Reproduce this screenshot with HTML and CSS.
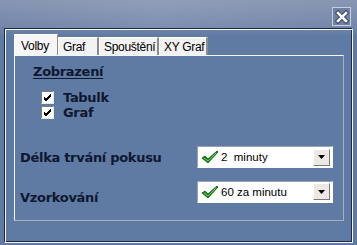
FILE: index.html
```html
<!DOCTYPE html>
<html>
<head>
<meta charset="utf-8">
<link rel="stylesheet" href="styles.css">
</head>
<body>
<div class="window">
  <div class="titlebar">
    <div class="close">
      <svg width="14" height="14" viewBox="0 0 14 14">
        <path d="M3 3 L11 11 M11 3 L3 11" stroke="#2c3b58" stroke-width="4.4" stroke-linecap="square"/>
        <path d="M3 3 L11 11 M11 3 L3 11" stroke="#ffffff" stroke-width="2.6" stroke-linecap="square"/>
      </svg>
    </div>
  </div>
  <div class="frame">
    <div class="tabs">
      <div class="tab active">Volby</div>
      <div class="tab t-graf">Graf</div>
      <div class="tab t-spou">Spouštění</div>
      <div class="tab t-xy">XY Graf</div>
    </div>
    <div class="panel">
      <div class="heading">Zobrazení</div>
      <div class="checks">
        <div class="check">
          <span class="box"><svg width="9" height="9" viewBox="0 0 9 9"><path d="M1 4 L3 6 L8 1 M1 5 L3 7 L8 2 M1 6 L3 8 L8 3" stroke="#000" stroke-width="1" fill="none"/></svg></span>
          <span class="clabel clip">Tabulky</span>
        </div>
        <div class="check">
          <span class="box"><svg width="9" height="9" viewBox="0 0 9 9"><path d="M1 4 L3 6 L8 1 M1 5 L3 7 L8 2 M1 6 L3 8 L8 3" stroke="#000" stroke-width="1" fill="none"/></svg></span>
          <span class="clabel">Graf</span>
        </div>
      </div>
      <div class="row row1">
        <span class="label">Délka trvání pokusu</span>
        <div class="combo">
          <svg class="ok" width="18" height="14" viewBox="0 0 18 14"><path d="M1 8 L4 6 L7 9 L16 1 L17 2 L7 13 Z" fill="#1d8a1d" stroke="#0d4f0d" stroke-width="0.8"/><path d="M3 8 L7 11 L15 3" stroke="#5cd05c" stroke-width="1" fill="none"/></svg>
          <span class="ctext">2&nbsp; minuty</span>
          <span class="btn"><svg width="7" height="4" viewBox="0 0 7 4"><path d="M0 0 H7 L3.5 4 Z" fill="#000"/></svg></span>
        </div>
      </div>
      <div class="row row2">
        <span class="label">Vzorkování</span>
        <div class="combo">
          <svg class="ok" width="18" height="14" viewBox="0 0 18 14"><path d="M1 8 L4 6 L7 9 L16 1 L17 2 L7 13 Z" fill="#1d8a1d" stroke="#0d4f0d" stroke-width="0.8"/><path d="M3 8 L7 11 L15 3" stroke="#5cd05c" stroke-width="1" fill="none"/></svg>
          <span class="ctext">60 za minutu</span>
          <span class="btn"><svg width="7" height="4" viewBox="0 0 7 4"><path d="M0 0 H7 L3.5 4 Z" fill="#000"/></svg></span>
        </div>
      </div>
    </div>
  </div>
</div>
</body>
</html>
```
FILE: styles.css
```css
html, body {
  margin: 0;
  padding: 0;
}
body {
  width: 357px;
  height: 245px;
  overflow: hidden;
  background: #5f7ba3;
}
.window {
  width: 357px;
  height: 245px;
  background: linear-gradient(to bottom, #8896b2 0px, #7487ab 26px, #5f7ba3 36px, #5f7ba3 100%);
  display: flex;
  flex-direction: column;
}
.titlebar {
  height: 28px;
  flex-shrink: 0;
  display: flex;
  justify-content: flex-end;
  align-items: flex-start;
  padding-right: 6px;
  box-sizing: border-box;
  background: linear-gradient(to right, rgba(255,255,255,0) 0%, rgba(255,255,255,0.08) 45%, rgba(255,255,255,0) 100%);
}
.close {
  margin-top: 7px;
  width: 17px;
  height: 17px;
  border: 1px solid #c8cfdc;
  background: #6f80a2;
  display: flex;
  align-items: center;
  justify-content: center;
}
.frame {
  margin: 0 4px;
  height: 215px;
  box-sizing: border-box;
  border: 1px solid;
  border-color: #1f2a42 #f4f6fa #f4f6fa #1f2a42;
  box-shadow: inset 1px 1px 0 #f4f6fa, inset -1px -1px 0 #1f2a42;
  padding: 5px 7px 0 9px;
  display: flex;
  flex-direction: column;
}
.tabs {
  display: flex;
  align-items: flex-end;
  height: 21px;
  flex-shrink: 0;
  font-family: "Liberation Sans", Arial, sans-serif;
  font-size: 12px;
  letter-spacing: -0.3px;
  color: #000;
}
.tab {
  flex-shrink: 0;
  white-space: nowrap;
  box-sizing: border-box;
  height: 18px;
  background: #f2f2f2;
  border-top: 1px solid #ffffff;
  border-left: 1px solid #ffffff;
  border-right: 2px solid #8c8c8c;
  padding: 2px 0 0 4px;
  line-height: 14px;
}
.tab.active {
  height: 21px;
  width: 44px;
  padding: 4px 0 0 6px;
  background: #f6f6f6;
  border-right: 1px solid #8c8c8c;
}
.t-graf { width: 41px; }
.t-spou { width: 60px; }
.t-xy { width: 49px; }
.panel {
  width: 330px;
  height: 166px;
  flex-shrink: 0;
  box-sizing: border-box;
  border-top: 1px solid #f4f6fa;
  border-left: 1px solid #f4f6fa;
  border-right: 1px solid #a9afba;
  border-bottom: 1px solid #a9afba;
  font-family: "DejaVu Sans", Verdana, sans-serif;
  font-weight: bold;
  font-size: 13px;
  letter-spacing: -0.3px;
  color: #0e1830;
  display: flex;
  flex-direction: column;
}
.heading {
  margin: 8px 0 0 18px;
  line-height: 15px;
  text-decoration: underline;
  text-underline-offset: 2px;
}
.checks {
  margin: 12px 0 0 26px;
  display: flex;
  flex-direction: column;
  gap: 2px;
}
.check {
  display: flex;
  align-items: center;
  height: 13px;
}
.box {
  width: 11px;
  height: 11px;
  background: #fff;
  border: 1px solid;
  border-color: #808080 #e8e8e8 #e8e8e8 #808080;
  display: flex;
  align-items: center;
  justify-content: center;
}
.clabel {
  margin-left: 9px;
  line-height: 15px;
}
.clip {
  width: 46px;
  overflow: hidden;
  white-space: nowrap;
}
.row {
  display: flex;
  align-items: center;
  justify-content: space-between;
  padding: 0 10px 0 5px;
}
.row1 { margin-top: 27px; }
.row2 { margin-top: 10px; }
.row2 .label { margin-top: 12px; }
.combo {
  width: 136px;
  height: 22px;
  box-sizing: border-box;
  background: #fff;
  border: 1px solid;
  border-color: #9aa2b2 #ffffff #ffffff #9aa2b2;
  display: flex;
  align-items: center;
  font-family: "Liberation Sans", Arial, sans-serif;
  font-weight: normal;
  letter-spacing: 0;
  font-size: 11.5px;
  color: #000;
}
.ok {
  margin-left: 3px;
}
.ctext {
  margin-left: 2px;
  flex: 1;
}
.btn {
  width: 15px;
  height: 15px;
  margin-right: 2px;
  background: #ece9e4;
  border: 1px solid;
  border-color: #ffffff #7a7a7a #7a7a7a #ffffff;
  display: flex;
  align-items: center;
  justify-content: center;
}
```
